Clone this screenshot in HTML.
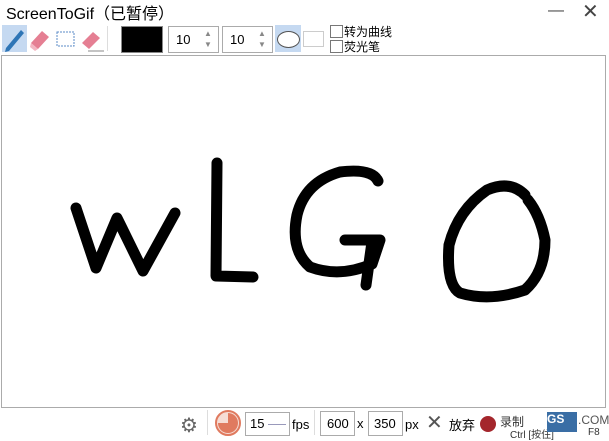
<!DOCTYPE html><html><head><style>
body{margin:0;width:609px;height:437px;background:#fff;font-family:"Liberation Sans","Noto Sans CJK SC",sans-serif;position:relative;overflow:hidden}
.a{position:absolute}
.t{font-size:16px;color:#000;left:6px;top:0px}
.box{position:absolute;border:1px solid #ababab;background:#fff}
.num{font-size:13px}
.sm{font-size:12px}
</style></head><body>
<div class="a t">ScreenToGif（已暂停）</div>
<div class="a" style="left:548px;top:2px;font-size:16px;color:#444">—</div>
<div class="a" style="left:582px;top:-1px;font-size:20px;color:#444">✕</div>
<!-- toolbar -->
<div class="a" style="left:2px;top:25px;width:25px;height:27px;background:#c5d9f1"></div>
<svg class="a" style="left:0;top:24px" width="110" height="30">
<path d="M6 24 L21 6 L24 9 L9 27 L5 28 Z" fill="#2e75b6"/>
<path d="M31 19 L42 7 L49 13 L38 25 Z" fill="#e57f93"/>
<path d="M31 19 L38 25 L35 27 L30 23Z" fill="#f3b6c2"/>
<rect x="57" y="8" width="17" height="14" fill="none" stroke="#5b8bc7" stroke-dasharray="2 1"/>
<path d="M82 19 L93 8 L100 14 L89 25 Z" fill="#e57f93"/>
<line x1="88" y1="27" x2="104" y2="27" stroke="#888"/>
</svg>
<div class="a" style="left:107px;top:26px;width:1px;height:25px;background:#ddd"></div>
<div class="a" style="left:121px;top:26px;width:40px;height:25px;background:#000;border:1px solid #888"></div>
<div class="box" style="left:168px;top:26px;width:49px;height:25px"><span class="a num" style="left:7px;top:5px">10</span><span class="a" style="left:35px;top:1px;font-size:8px;color:#888;line-height:11px">▲<br>▼</span></div>
<div class="box" style="left:222px;top:26px;width:49px;height:25px"><span class="a num" style="left:7px;top:5px">10</span><span class="a" style="left:35px;top:1px;font-size:8px;color:#888;line-height:11px">▲<br>▼</span></div>
<div class="a" style="left:275px;top:25px;width:26px;height:27px;background:#c5d9f1"></div>
<div class="a" style="left:277px;top:31px;width:21px;height:15px;border:1px solid #555;border-radius:50%;background:#fff"></div>
<div class="box" style="left:303px;top:31px;width:19px;height:14px;border-color:#ccc"></div>
<div class="box" style="left:330px;top:25px;width:11px;height:11px;border-color:#777"></div>
<div class="box" style="left:330px;top:40px;width:11px;height:11px;border-color:#777"></div>
<div class="a sm" style="left:344px;top:23px">转为曲线</div>
<div class="a sm" style="left:344px;top:38px">荧光笔</div>
<!-- canvas -->
<div class="box" style="left:1px;top:55px;width:603px;height:351px"></div>
<svg class="a" style="left:0;top:0" width="609" height="437" fill="none" stroke="#000" stroke-width="11" stroke-linecap="round" stroke-linejoin="round">
<path d="M76 208 L96 268 L117 218 L143 271 L175 213"/>
<path d="M217 163 L216 276 L253 277"/>
<path d="M378 181 Q372 168 340 172 Q305 182 297 215 Q290 250 310 267 Q340 278 372 264 L380 240 L345 240"/>
<path d="M372 242 L366 285"/>
<path d="M525 195 Q510 180 487 190 Q458 210 449 245 Q446 285 460 293 Q490 302 525 290 Q545 272 545 240 Q540 215 528 200"/>
</svg>
<!-- bottom -->
<div class="a" style="left:180px;top:413px;font-size:20px;color:#666">⚙</div>
<div class="a" style="left:207px;top:410px;width:1px;height:25px;background:#ddd"></div>
<svg class="a" style="left:214px;top:409px" width="28" height="28"><circle cx="14" cy="14" r="12" fill="#f6ddd5" stroke="#e07a5f" stroke-width="2"/><path d="M14 14 L14 4 A10 10 0 1 1 4 14 Z" fill="#e07a5f"/></svg>
<div class="box" style="left:245px;top:412px;width:43px;height:22px"><span class="a num" style="left:4px;top:3px">15</span><span class="a" style="left:22px;top:11px;width:18px;height:1px;background:#99b"></span></div>
<div class="a num" style="left:292px;top:417px">fps</div>
<div class="a" style="left:314px;top:410px;width:1px;height:25px;background:#ddd"></div>
<div class="box" style="left:320px;top:411px;width:33px;height:23px"><span class="a num" style="left:6px;top:4px">600</span></div>
<div class="a num" style="left:357px;top:416px">x</div>
<div class="box" style="left:368px;top:411px;width:33px;height:23px"><span class="a num" style="left:5px;top:4px">350</span></div>
<div class="a num" style="left:405px;top:417px">px</div>
<div class="a" style="left:426px;top:410px;font-size:20px;color:#555">✕</div>
<div class="a num" style="left:449px;top:415px">放弃</div>
<div class="a" style="left:480px;top:416px;width:16px;height:16px;border-radius:50%;background:#a4262c"></div>
<div class="a sm" style="left:500px;top:413px;color:#333">录制</div>
<div class="a" style="left:510px;top:426px;font-size:10px;color:#333">Ctrl [按住]</div>
<div class="a" style="left:547px;top:412px;width:30px;height:20px;background:#3a6ea5;color:#fff;font-size:12px;font-weight:bold">GS</div>
<div class="a sm" style="left:578px;top:413px;color:#555">.COM</div>
<div class="a" style="left:588px;top:427px;font-size:10px;color:#333">F8</div>
</body></html>
